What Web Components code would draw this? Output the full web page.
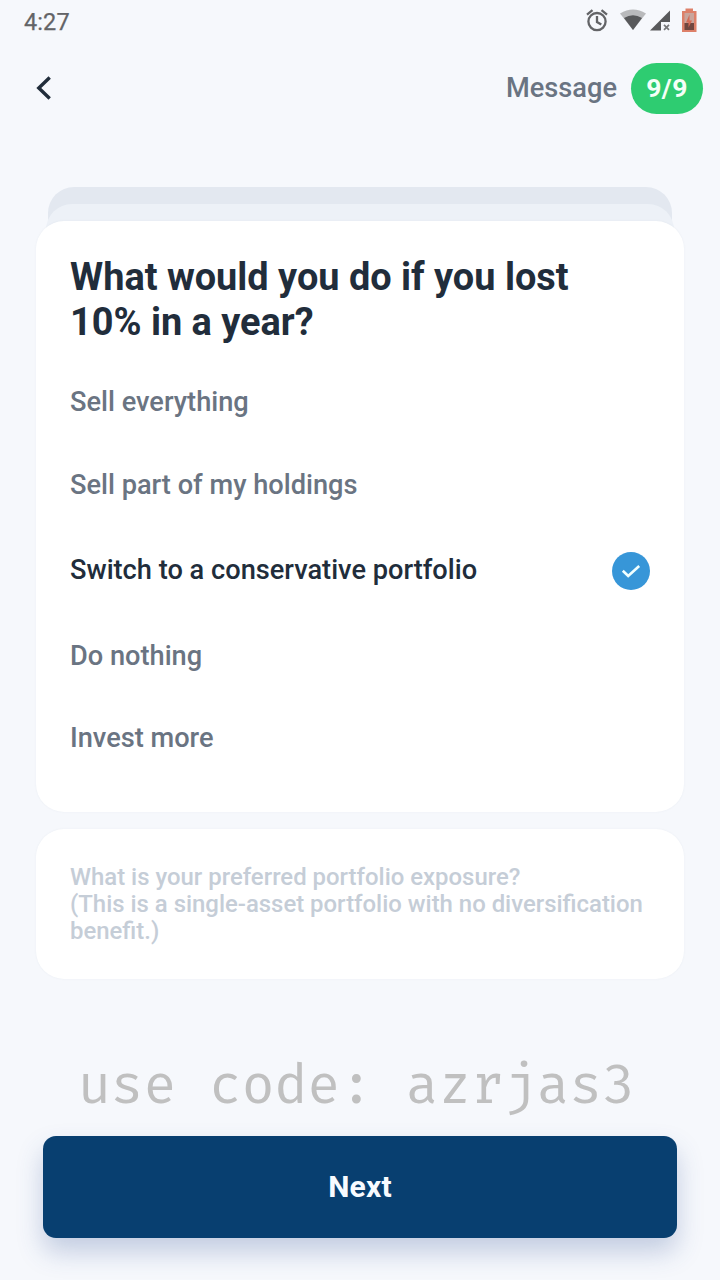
<!DOCTYPE html>
<html lang="en">
<head>
<meta charset="utf-8">
<title>Risk questionnaire</title>
<style>
html,body{margin:0;height:100%;background:#f6f8fc}
body{font-family:Roboto,"Liberation Sans",sans-serif;color:#212d3b;overflow:hidden}
</style>
</head>
<body>
<quiz-screen></quiz-screen>
<script>
const define = (name, html) => {
  const t = document.createElement('template');
  t.innerHTML = html;
  customElements.define(name, class extends HTMLElement {
    constructor() {
      super();
      this.attachShadow({mode: 'open'}).appendChild(t.content.cloneNode(true));
    }
  });
};

define('status-bar', `
<style>
:host{display:flex;height:44px;box-sizing:border-box;padding:0 22px 0 24px;align-items:center;justify-content:space-between;color:#636467}
time{font-size:23.5px;line-height:44px;letter-spacing:.1px;font-weight:400;-webkit-text-stroke:.25px}
svg{display:block;width:114px;height:28px}
</style>
<time>4:27</time>
<svg viewBox="584 8 114 28">
  <g fill="none" stroke="#636467" stroke-width="2.300">
    <circle cx="597" cy="21.600" r="8.600"/>
    <path d="M597 16v6l4.300 2.600M587 14.600l5.500-4.400M607 14.600l-5.500-4.400"/>
  </g>
  <path fill="#b9babc" d="M620 13.600Q633 5.500 646 13.600L633 30z"/>
  <path fill="#58595b" d="M624 18Q633 12.300 642 18L633 30z"/>
  <path fill="#58595b" d="M670 10.500V22h-9v8.600H650z"/>
  <path stroke="#77787a" stroke-width="1.700" d="M664 24.800l5 5M669 24.800l-5 5"/>
  <path fill="#dd8069" d="M685.500 8.500h7.500v2.500h3.500v21h-14.500v-21h3.500z"/>
  <path fill="#c9a59c" d="M684.500 13h9.500v10h-9.500z"/>
  <path fill="#70473f" d="M684.500 23h9.500v7h-9.500z"/>
  <path fill="#d46b55" d="M689.500 14.500v6h2.500l-3.500 7v-5h-2.500z"/>
</svg>`);

define('progress-pill', `
<style>
:host{display:flex;align-items:center;justify-content:center;width:72px;height:51px;box-sizing:border-box;padding-bottom:2px;border-radius:26px;background:#2ecc71;color:#f4fff8;font-weight:700;font-size:26.5px;letter-spacing:.5px}
</style><slot></slot>`);

define('nav-header', `
<style>
:host{display:flex;align-items:center;height:88px;padding:0 17px 0 36px;box-sizing:border-box}
svg{width:16px;height:26px;margin-right:auto}
span{font-size:27.2px;font-weight:500;line-height:32px;color:#6a7482;margin-right:14px}
</style>
<svg viewBox="36 75 16 26"><path d="M49.700 77.500L38.800 88l10.900 10.500" fill="none" stroke="#212d3b" stroke-width="3.400"/></svg>
<span><slot name="label"></slot></span><slot name="pill"></slot>`);

define('check-badge', `
<style>:host{display:block;width:38px;height:38px}svg{display:block}</style>
<svg width="38" height="38" viewBox="0 0 38 38"><circle cx="19" cy="19" r="19" fill="#3796d8"/><path d="M10.800 18.800l5.400 5.200 11-10" fill="none" stroke="#f1ffff" stroke-width="2.600"/></svg>`);

define('answer-option', `
<style>
:host{display:flex;align-items:center;justify-content:space-between;height:31px;font-size:27.200px;line-height:31px;font-weight:500;color:#6a7482;white-space:nowrap}
:host([selected]){height:38px;color:#212d3b}
</style><span><slot></slot></span><slot name="mark"></slot>`);

define('question-card', `
<style>
:host{display:block}
.back,.mid{box-sizing:border-box;border-radius:26px 26px 0 0}
.back{background:#e3e8f0;height:60px;margin:0 12px -43px}
.mid{background:#edf1f7;height:50px;margin:0 10px -33px;position:relative}
.card{position:relative;height:591px;box-sizing:border-box;background:#fff;border-radius:28px;padding:34px 34px 0;box-shadow:0 0 2px rgba(120,135,160,.1)}
h1{margin:0 0 42.400px;font-size:37.900px;line-height:45px;font-weight:700}
.list{display:flex;flex-direction:column;gap:51.150px}
</style>
<div class="back"></div><div class="mid"></div>
<section class="card"><h1><slot name="title"></slot></h1><div class="list"><slot></slot></div></section>`);

define('upcoming-card', `
<style>
:host{display:block;height:150px;box-sizing:border-box;margin-top:17px;padding:34.500px 34px;border-radius:28px;background:#fff;color:#c5cdd7;font-size:23.920px;font-weight:500;line-height:27.3px;white-space:nowrap;box-shadow:0 0 2px rgba(120,135,160,.1)}
</style><slot></slot>`);

define('promo-code', `
<style>
:host{display:block;text-align:center;padding-right:7px;font:54.6px/64px "Fira Mono","Liberation Mono",monospace;color:#c0c0c0;white-space:nowrap}
</style><slot></slot>`);

define('primary-button', `
<style>
:host{display:block}
button{display:block;width:100%;height:102px;border:0;padding:0 0 2px;border-radius:13px;background:#083f70;color:#f7fbff;font:700 30px Roboto,sans-serif;letter-spacing:.2px;box-shadow:0 14px 26px rgba(50,80,150,.26)}
</style><button><slot></slot></button>`);

define('quiz-screen', `
<style>
:host{display:flex;flex-direction:column;width:720px;height:1280px;background:#f6f8fc}
main{padding:55px 36px 0}
promo-code{margin-top:74px}
primary-button{margin:19px 43px 0}
</style>
<status-bar></status-bar>
<nav-header><span slot="label">Message</span><progress-pill slot="pill">9/9</progress-pill></nav-header>
<main>
<question-card>
<span slot="title">What would you do if you lost<br>10% in a year?</span>
<answer-option>Sell everything</answer-option>
<answer-option>Sell part of my holdings</answer-option>
<answer-option selected>Switch to a conservative portfolio<check-badge slot="mark"></check-badge></answer-option>
<answer-option>Do nothing</answer-option>
<answer-option>Invest more</answer-option>
</question-card>
<upcoming-card>What is your preferred portfolio exposure?<br>(This is a single-asset portfolio with no diversification<br>benefit.)</upcoming-card>
</main>
<promo-code>use code: azrjas3</promo-code>
<primary-button>Next</primary-button>`);
</script>
</body>
</html>
